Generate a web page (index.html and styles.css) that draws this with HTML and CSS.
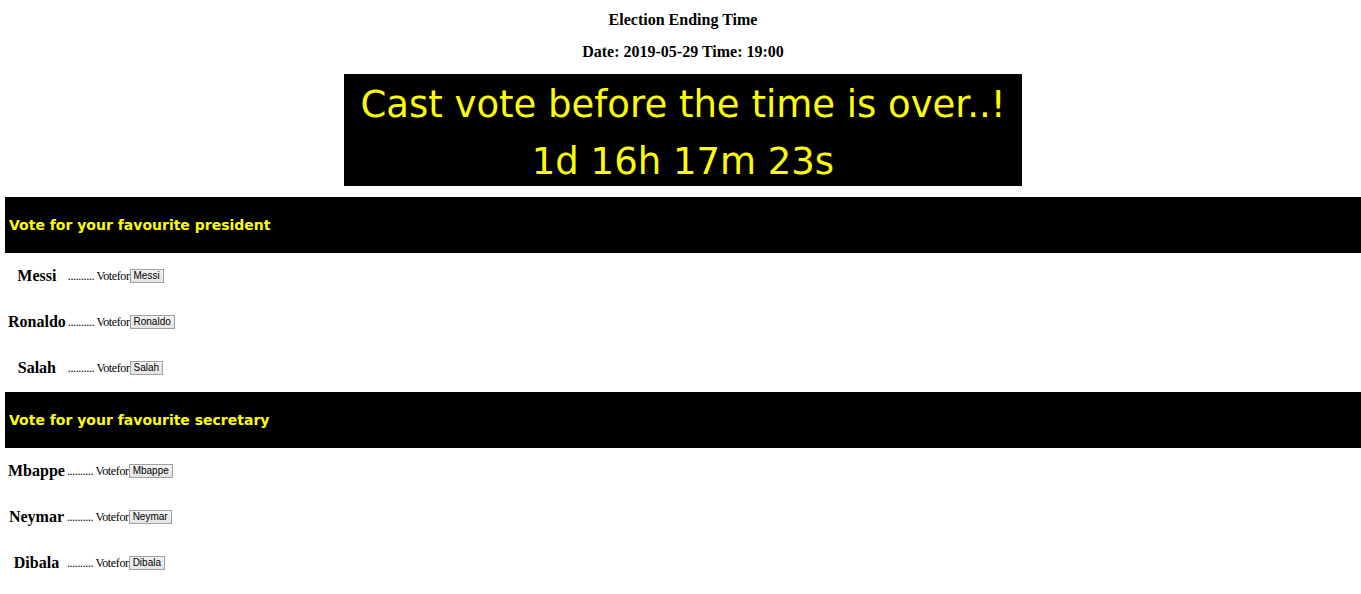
FILE: index.html
```html
<!DOCTYPE html>
<html>
<head>
<meta charset="utf-8">
<title>Election</title>
<link rel="stylesheet" href="styles.css">
</head>
<body>
<header class="top">
  <h4 class="title">Election Ending Time</h4>
  <h4 class="title">Date: 2019-05-29 Time: 19:00</h4>
  <div class="banner">
    <p class="banner-line">Cast vote before the time is over..!</p>
    <p class="banner-line">1d 16h 17m 23s</p>
  </div>
</header>

<section class="section">
  <h3 class="section-head">Vote for your favourite president</h3>
  <div class="candidates">
    <div class="name">Messi</div>
    <div class="vote"><span class="label">.......... Votefor</span><button class="btn">Messi</button></div>
    <div class="name">Ronaldo</div>
    <div class="vote"><span class="label">.......... Votefor</span><button class="btn">Ronaldo</button></div>
    <div class="name">Salah</div>
    <div class="vote"><span class="label">.......... Votefor</span><button class="btn">Salah</button></div>
  </div>
</section>

<section class="section">
  <h3 class="section-head">Vote for your favourite secretary</h3>
  <div class="candidates">
    <div class="name">Mbappe</div>
    <div class="vote"><span class="label">.......... Votefor</span><button class="btn">Mbappe</button></div>
    <div class="name">Neymar</div>
    <div class="vote"><span class="label">.......... Votefor</span><button class="btn">Neymar</button></div>
    <div class="name">Dibala</div>
    <div class="vote"><span class="label">.......... Votefor</span><button class="btn">Dibala</button></div>
  </div>
</section>
</body>
</html>
```

FILE: styles.css
```css
html {
  overflow: hidden;
}

body {
  margin: 0;
  padding: 0;
  width: 1366px;
  background: #fff;
  color: #000;
  font-family: "Liberation Serif", "Times New Roman", serif;
}

.top {
  display: flex;
  flex-direction: column;
  align-items: center;
  padding-top: 10px;
}

.title {
  margin: 0 0 12px 0;
  font-size: 16px;
  line-height: 20px;
  font-weight: bold;
  text-align: center;
}

.banner {
  box-sizing: border-box;
  width: 678px;
  height: 112px;
  padding-top: 2px;
  overflow: hidden;
  background: #000;
  color: #ffff00;
  text-align: center;
  font-family: "DejaVu Sans", sans-serif;
  font-size: 37px;
}

.banner-line {
  margin: 0;
  line-height: 57px;
  white-space: nowrap;
}

.section {
  margin-top: 11px;
}

.section + .section {
  margin-top: 1px;
}

.section-head {
  margin: 0 0 0 5px;
  height: 56px;
  display: flex;
  align-items: center;
  padding-left: 4px;
  background: #000;
  color: #ffff00;
  font-family: "DejaVu Sans", sans-serif;
  font-size: 14px;
  font-weight: bold;
}

.candidates {
  display: grid;
  grid-template-columns: max-content max-content;
  grid-auto-rows: 46px;
  align-items: center;
  column-gap: 2px;
  padding-left: 8px;
}

.name {
  justify-self: center;
  font-size: 16px;
  font-weight: bold;
}

.vote {
  display: flex;
  align-items: center;
}

.label {
  font-size: 12px;
  letter-spacing: -0.38px;
}

.btn {
  margin: 0;
  padding: 0 3px;
  height: 14px;
  font-family: "Liberation Sans", Arial, sans-serif;
  font-size: 10px;
  line-height: 12px;
  color: #000;
  background: linear-gradient(#f2f2f2, #e4e4e4);
  border: 1px solid #a0a0a0;
  border-radius: 0;
}
```
